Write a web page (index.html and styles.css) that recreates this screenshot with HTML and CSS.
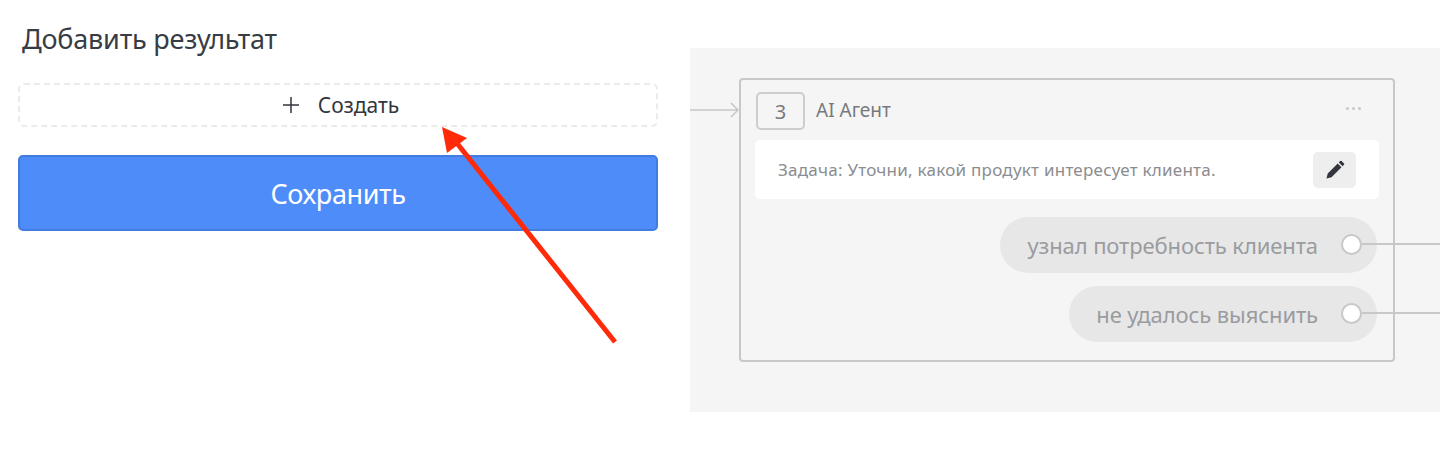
FILE: index.html
```html
<!DOCTYPE html>
<html lang="en">
<head>
    <meta charset="UTF-8">
    <title>Добавить результат</title>
    <link rel="stylesheet" href="styles.css">
</head>
<body>
    <div class="page">
        <div class="form">
            <h2 class="form-title">Добавить результат</h2>
            <button class="add-btn">
                <svg class="plus" width="18" height="18" viewBox="0 0 18 18"><path d="M9 1v16M1 9h16" stroke="#33363d" stroke-width="1.5" fill="none"/></svg>
                <span>Создать</span>
            </button>
            <button class="save-btn">Сохранить</button>
        </div>

        <div class="canvas">
            <svg class="in-arrow" width="49" height="16" viewBox="0 0 49 16"><path d="M0 8h48M41 1l7 7-7 7" stroke="#c6c6c6" stroke-width="1.5" fill="none"/></svg>
            <div class="node">
                <div class="node-head">
                    <div class="node-num">3</div>
                    <div class="node-name">AI Агент</div>
                    <div class="node-more"><i></i><i></i><i></i></div>
                </div>
                <div class="task">
                    <span>Задача: Уточни, какой продукт интересует клиента.</span>
                    <div class="edit-btn">
                        <svg width="20" height="20" viewBox="0 0 20 20"><path d="M1.500 18.500l1.200-5 10-10 3.800 3.800-10 10zM13.800 2.400l1.400-1.400a1 1 0 0 1 1.400 0l2.400 2.400a1 1 0 0 1 0 1.400l-1.400 1.400z" fill="#33363d"/></svg>
                    </div>
                </div>
                <div class="outcomes">
                    <div class="outcome">узнал потребность клиента<span class="dot"></span></div>
                    <div class="outcome">не удалось выяснить<span class="dot"></span></div>
                </div>
            </div>
        </div>

        <svg class="pointer" width="1440" height="460" viewBox="0 0 1440 460">
            <path d="M615 342L456 142" stroke="#ff2a0a" stroke-width="5" fill="none"/>
            <path d="M442 127L467 138L447 153z" fill="#ff2a0a"/>
        </svg>
    </div>
</body>
</html>
```

FILE: styles.css
```css
* { box-sizing: border-box; }
body {
    margin: 0;
    background: white;
    font-family: "Noto Sans", "Open Sans", sans-serif;
}
.page {
    position: relative;
    height: 460px;
    display: flex;
    align-items: flex-start;
    overflow: hidden;
}
.form {
    width: 640px;
    margin-left: 18px;
    padding-top: 22px;
}
.form-title {
    margin: 0 0 27px 4px;
    font-size: 27px;
    line-height: 34px;
    font-weight: 400;
    letter-spacing: -0.2px;
    color: #383c44;
}
.add-btn {
    display: flex;
    align-items: center;
    justify-content: center;
    gap: 18px;
    width: 100%;
    height: 44px;
    margin-bottom: 28px;
    padding-left: 11px;
    background: white;
    border: 2px dashed #ebebeb;
    border-radius: 6px;
    font-family: inherit;
    font-size: 21px;
    color: #33363d;
}
.save-btn {
    display: block;
    width: 100%;
    height: 76px;
    background: #4e8cfa;
    border: 2px solid #437cdf;
    border-radius: 5px;
    font-family: inherit;
    font-size: 27px;
    letter-spacing: -0.4px;
    color: white;
}
.canvas {
    position: relative;
    width: 750px;
    height: 364px;
    margin: 48px 0 0 32px;
    padding: 30px 45px 0 49px;
    background: #f5f5f5;
}
.in-arrow {
    position: absolute;
    left: 0;
    top: 54px;
}
.node {
    height: 284px;
    padding: 12px 14px 0 14px;
    border: 2px solid #c8c8c8;
    border-radius: 4px;
}
.node-head {
    display: flex;
    align-items: center;
    height: 38px;
    padding-left: 1px;
}
.node-num {
    width: 49px;
    height: 38px;
    line-height: 36px;
    border: 2px solid #cdcdcd;
    border-radius: 5px;
    text-align: center;
    font-size: 20px;
    color: #77797d;
}
.node-name {
    margin-left: 11px;
    font-size: 19px;
    line-height: 36px;
    padding-bottom: 2px;
    color: #77797d;
}
.node-more {
    display: flex;
    gap: 3px;
    margin-left: auto;
    margin-right: 18px;
    padding-bottom: 6px;
}
.node-more i {
    width: 3px;
    height: 3px;
    border-radius: 50%;
    background: #c8c8c8;
}
.task {
    display: flex;
    align-items: center;
    justify-content: space-between;
    height: 59px;
    margin-top: 10px;
    padding: 0 23px;
    background: white;
    border-radius: 5px;
    font-size: 17px;
    letter-spacing: 0.25px;
    color: #8b8d90;
}
.edit-btn {
    display: flex;
    align-items: center;
    justify-content: center;
    width: 43px;
    height: 36px;
    background: #eeeeee;
    border-radius: 5px;
}
.outcomes {
    display: flex;
    flex-direction: column;
    align-items: flex-end;
    gap: 13px;
    margin-top: 18px;
    margin-right: 2px;
}
.outcome {
    position: relative;
    height: 56px;
    padding: 0 59px 0 27px;
    line-height: 56px;
    background: #e7e7e7;
    border-radius: 28px;
    font-size: 22px;
    letter-spacing: -0.1px;
    color: #9a9c9f;
}
.dot {
    position: absolute;
    right: 15px;
    top: 17px;
    width: 21px;
    height: 21px;
    background: white;
    border: 2px solid #c8c8c8;
    border-radius: 50%;
}
.dot::after {
    content: "";
    position: absolute;
    left: 19px;
    top: 7px;
    width: 80px;
    height: 2px;
    background: #c8c8c8;
}
.pointer {
    position: absolute;
    left: 0;
    top: 0;
    pointer-events: none;
}
```
